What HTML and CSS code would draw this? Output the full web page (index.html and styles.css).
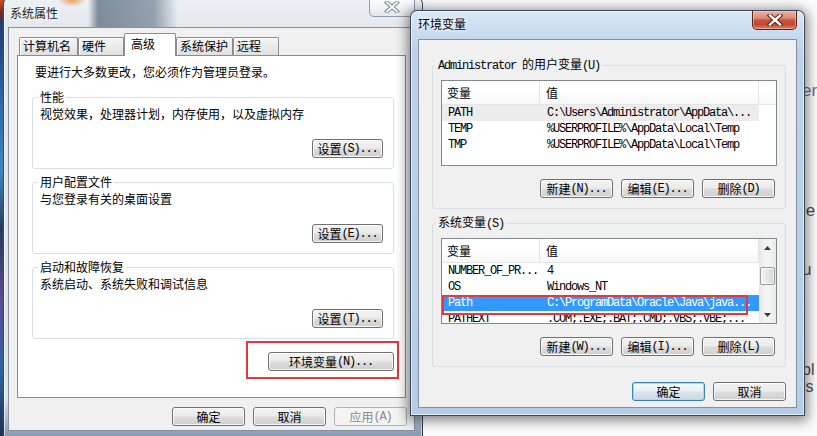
FILE: index.html
```html
<!DOCTYPE html>
<html lang="zh-CN">
<head>
<meta charset="utf-8">
<title>系统属性 - 环境变量</title>
<link rel="stylesheet" href="styles.css">
</head>
<body>
<div class="desk">
  <div class="strip"></div>

  <div class="bgpage">
    <p class="bp1 visited">er</p>
    <p class="bp2">le</p>
    <p class="bp3">u r</p>
    <p class="bp4">bl</p>
    <p class="bp5">is</p>
  </div>

  <div class="win wl">
    <div class="titlebar">
      <span class="title">系统属性</span>
      <span class="close close-in">
        <svg width="16" height="12" viewBox="0 0 16 12"><path d="M3 1.5 L13 10.5 M13 1.5 L3 10.5" stroke="#7d8794" stroke-width="4" stroke-linecap="square"/><path d="M3 1.5 L13 10.5 M13 1.5 L3 10.5" stroke="#f4f6f8" stroke-width="2" stroke-linecap="square"/></svg>
      </span>
    </div>
    <div class="client cl">
      <div class="tabs">
        <div class="tab t1">计算机名</div>
        <div class="tab t2">硬件</div>
        <div class="tab t3">高级</div>
        <div class="tab t4">系统保护</div>
        <div class="tab t5">远程</div>
      </div>
      <div class="panel">
        <p class="intro">要进行大多数更改，您必须作为管理员登录。</p>
        <fieldset class="grp">
          <legend>性能</legend>
          <p>视觉效果，处理器计划，内存使用，以及虚拟内存</p>
          <div class="row-end"><button class="btn bs">设置<span class="m">(S)...</span></button></div>
        </fieldset>
        <fieldset class="grp">
          <legend>用户配置文件</legend>
          <p>与您登录有关的桌面设置</p>
          <div class="row-end"><button class="btn bs">设置<span class="m">(E)...</span></button></div>
        </fieldset>
        <fieldset class="grp">
          <legend>启动和故障恢复</legend>
          <p>系统启动、系统失败和调试信息</p>
          <div class="row-end"><button class="btn bs">设置<span class="m">(T)...</span></button></div>
        </fieldset>
        <div class="row-end env-row">
          <span class="hl"><button class="btn benv">环境变量<span class="m">(N)...</span></button></span>
        </div>
      </div>
      <div class="foot">
        <button class="btn bw">确定</button>
        <button class="btn bw">取消</button>
        <button class="btn bw dis">应用<span class="m">(A)</span></button>
      </div>
    </div>
  </div>

  <div class="win wr">
    <div class="titlebar">
      <span class="title">环境变量</span>
      <span class="close close-act">
        <svg width="16" height="12" viewBox="0 0 16 12"><path d="M3 1.5 L13 10.5 M13 1.5 L3 10.5" stroke="#5a1d14" stroke-width="4.4" stroke-linecap="square"/><path d="M3 1.5 L13 10.5 M13 1.5 L3 10.5" stroke="#ffffff" stroke-width="2.4" stroke-linecap="square"/></svg>
      </span>
    </div>
    <div class="client cr">
      <fieldset class="rg">
        <legend><span class="m">Administrator </span>的用户变量<span class="m">(U)</span></legend>
        <div class="list">
          <div class="lbody">
            <div class="lhead"><span class="c1">变量</span><span class="c2">值</span></div>
            <div class="lrow m hov"><span class="c1">PATH</span><span class="c2">C:\Users\Administrator\AppData\...</span></div>
            <div class="lrow m"><span class="c1">TEMP</span><span class="c2">%USERPROFILE%\AppData\Local\Temp</span></div>
            <div class="lrow m"><span class="c1">TMP</span><span class="c2">%USERPROFILE%\AppData\Local\Temp</span></div>
          </div>
          <div class="hfill"></div>
        </div>
        <div class="row-end">
          <button class="btn bw">新建<span class="m">(N)...</span></button>
          <button class="btn bw">编辑<span class="m">(E)...</span></button>
          <button class="btn bw">删除<span class="m">(D)</span></button>
        </div>
      </fieldset>
      <fieldset class="rg">
        <legend>系统变量<span class="m">(S)</span></legend>
        <div class="list">
          <div class="lbody">
            <div class="lhead"><span class="c1">变量</span><span class="c2">值</span></div>
            <div class="lrow m"><span class="c1">NUMBER_OF_PR...</span><span class="c2">4</span></div>
            <div class="lrow m"><span class="c1">OS</span><span class="c2">Windows_NT</span></div>
            <div class="lrow m sel"><span class="c1">Path</span><span class="c2">C:\ProgramData\Oracle\Java\java...</span></div>
            <div class="lrow m"><span class="c1">PATHEXT</span><span class="c2">.COM;.EXE;.BAT;.CMD;.VBS;.VBE;...</span></div>
          </div>
          <div class="sbar">
            <div class="sarr"><svg width="7" height="4" viewBox="0 0 7 4"><path d="M0 4 L3.5 0 L7 4 Z" fill="#3c3c3c"/></svg></div>
            <div class="thumb"></div>
            <div class="sfill"></div>
            <div class="sarr"><svg width="7" height="4" viewBox="0 0 7 4"><path d="M0 0 L7 0 L3.5 4 Z" fill="#3c3c3c"/></svg></div>
          </div>
        </div>
        <div class="row-end">
          <button class="btn bw">新建<span class="m">(W)...</span></button>
          <button class="btn bw">编辑<span class="m">(I)...</span></button>
          <button class="btn bw">删除<span class="m">(L)</span></button>
        </div>
      </fieldset>
      <div class="rfoot">
        <button class="btn bw def">确定</button>
        <button class="btn bw">取消</button>
      </div>
    </div>
  </div>
</div>
</body>
</html>
```

FILE: styles.css
```css
* { box-sizing: border-box; }
html, body { margin: 0; padding: 0; }
body {
  width: 817px;
  height: 436px;
  overflow: hidden;
  font-family: "Noto Sans CJK SC", "Liberation Sans", sans-serif;
  font-size: 12px;
  line-height: 16px;
  color: #000;
}
.desk {
  position: relative;
  width: 817px;
  height: 436px;
  overflow: hidden;
  background: #fbfbfb;
}
.strip {
  position: absolute;
  left: 0;
  top: 0;
  width: 4px;
  height: 436px;
  background: linear-gradient(#c8502e 0, #7a2a1a 12px, #1d3d78 24px, #2c5fa6 90px, #3d86c2 170px, #243a5c 230px, #5b4a98 300px, #2f63a6 370px, #1f3150 436px);
}
.m {
  font-family: "Liberation Mono", monospace;
  font-size: 12px;
  letter-spacing: -1.2px;
}

/* background web page fragments */
.bgpage {
  position: absolute;
  left: 802px;
  top: 0;
  display: flex;
  flex-direction: column;
  font-family: "Liberation Sans", sans-serif;
  font-size: 17px;
  color: #4a4a4a;
}
.bgpage p { margin: 0; line-height: 20px; height: 20px; white-space: nowrap; }
.bgpage .visited { color: #6a6a9e; }
.bp1 { margin-top: 81px !important; }
.bp2 { margin-top: 100px !important; }
.bp3 { margin-top: 39px !important; }
.bp4 { margin-top: 81px !important; font-size: 16px; line-height: 17px !important; height: 17px !important; }
.bp5 { font-size: 16px; line-height: 17px !important; height: 17px !important; }

/* windows */
.win {
  position: absolute;
  display: flex;
  flex-direction: column;
  border: 1px solid rgba(20, 30, 45, 0.78);
  border-radius: 7px 7px 0 0;
}
.wl {
  left: 3px;
  top: -3px;
  width: 420px;
  height: 442px;
  padding: 0 7px 7px 4px;
  background:
    radial-gradient(ellipse 14px 7px at 68px 2px, rgba(230, 140, 60, 0.85), rgba(230, 140, 60, 0) 100%) no-repeat,
    linear-gradient(to right, rgba(110, 125, 140, 0) 0, rgba(110, 125, 140, 0) 84px, rgba(100, 116, 132, 0.8) 94px, rgba(112, 128, 144, 0.7) 150px, rgba(120, 135, 150, 0) 174px) 0 0 / 100% 30px no-repeat,
    linear-gradient(#eef1f4 0, #e3e8ee 30px, #dde4eb 400px, #8b9db2 436px);
  box-shadow: inset 0 0 0 1px rgba(255, 255, 255, 0.55);
}
.wr {
  left: 410px;
  top: 10px;
  width: 395px;
  height: 406px;
  padding: 0 7px 7px 7px;
  z-index: 2;
  background: linear-gradient(#d9e7f5 0, #c6daee 26px, #bcd2ea 40px, #b5cde7 100%);
  box-shadow: inset 0 0 0 1px rgba(255, 255, 255, 0.6), 0 2px 12px 3px rgba(0, 0, 0, 0.45);
}
.titlebar {
  display: flex;
  justify-content: space-between;
  align-items: flex-start;
  flex: none;
}
.wl .titlebar { height: 29px; }
.wr .titlebar { height: 28px; }
.title { text-shadow: 0 0 6px #fff, 0 0 3px #fff; }
.wl .title { padding: 7px 0 0 2px; color: #1a1a1a; }
.wr .title { padding: 5px 0 0 0; }
.close {
  display: flex;
  align-items: center;
  justify-content: center;
  height: 19px;
  border-radius: 0 0 5px 5px;
}
.close-in {
  width: 46px;
  border: 1px solid #8e9aa8;
  border-top: 0;
  background: linear-gradient(#fdfdfe, #eef1f5 60%, #e2e7ed);
}
.close-act {
  width: 45px;
  border: 1px solid #5b2219;
  border-top: 0;
  background: linear-gradient(#eab2a4 0, #dc8a77 40%, #c9503b 52%, #c24832 75%, #d9856c 100%);
  box-shadow: inset 0 0 0 1px rgba(255, 220, 210, 0.45);
}

/* client areas */
.client {
  flex: none;
  background: #f0f0f0;
  border: 1px solid rgba(60, 80, 105, 0.6);
}
.cl {
  height: 404px;
  padding: 0 8px;
}
.cr {
  height: 369px;
  padding: 16px 10px 0 13px;
}

/* tabs */
.tabs {
  display: flex;
  align-items: flex-end;
  height: 27px;
  padding-left: 2px;
}
.tab {
  height: 18px;
  border: 1px solid #898c95;
  border-bottom: 0;
  border-radius: 2px 2px 0 0;
  background: linear-gradient(#f4f4f4, #ebebeb 50%, #dfdfdf);
  box-shadow: inset 1px 1px 0 #fff;
  padding-left: 3px;
  white-space: nowrap;
}
.t1 { width: 59px; }
.t2 { width: 46px; }
.t3 {
  width: 52px;
  height: 23px;
  margin-bottom: -1px;
  background: #fff;
  box-shadow: none;
  position: relative;
  z-index: 1;
  padding: 2px 0 0 6px;
}
.t4 { width: 57px; }
.t5 { width: 46px; }
.panel {
  height: 343px;
  border: 1px solid #898c95;
  background: #fff;
  padding: 8px 11px 0 14px;
}
.intro { margin: 0 0 0 3px; }

/* group boxes */
.grp, .rg {
  margin: 0;
  min-width: 0;
  border: 1px solid #d5dfe5;
  border-radius: 3px;
}
.grp {
  margin-top: 9px;
  padding: 1px 10px 10px 7px;
}
.grp + .grp { margin-top: 5px; }
.grp legend {
  padding: 0 2px;
  margin-left: -2px;
  line-height: 16px;
}
.grp p { margin: 0; }
.row-end { display: flex; justify-content: flex-end; gap: 8px; }
.grp .row-end { margin-top: 17px; }
.env-row { margin-top: 13px; }
.hl { position: relative; display: block; }
.hl::after {
  content: "";
  position: absolute;
  left: -22px;
  right: -5px;
  top: -11px;
  bottom: -8px;
  border: 2px solid #e4373f;
}

.rg { padding: 6px 8px 10px 8px; }
.rg + .rg { margin-top: 5px; }
.rg legend {
  padding: 0 2px;
  margin-left: -5px;
  line-height: 16px;
  white-space: nowrap;
}
.rg .row-end { margin-top: 13px; margin-right: 2px; }

/* buttons */
.btn {
  font: inherit;
  height: 19px;
  padding: 0;
  border: 1px solid #707070;
  border-radius: 3px;
  background: linear-gradient(#f2f2f2 0%, #ebebeb 49%, #dddddd 51%, #cfcfcf 100%);
  box-shadow: inset 0 0 0 1px rgba(255, 255, 255, 0.8);
  color: #000;
  display: flex;
  align-items: center;
  justify-content: center;
  line-height: 16px;
  white-space: nowrap;
}
.bs { width: 71px; }
.benv { width: 126px; }
.bw { width: 73px; }
.dis {
  border-color: #adb2b5;
  background: #f4f4f4;
  color: #8a8a8a;
  box-shadow: none;
}
.def {
  border-color: #3c7fb1;
  box-shadow: inset 0 0 0 1px #9fdcf8;
  background: linear-gradient(#f3f8fb 0%, #e8f1f7 49%, #d9e5ee 51%, #cbd9e4 100%);
}
.foot {
  display: flex;
  justify-content: flex-end;
  gap: 8px;
  margin-top: 9px;
  margin-right: -1px;
}
.rfoot {
  display: flex;
  justify-content: flex-end;
  gap: 8px;
  margin-top: 15px;
}

/* list views */
.list {
  height: 86px;
  border: 1px solid #828790;
  background: #fff;
  display: flex;
  overflow: hidden;
}
.lbody { width: 317px; flex: none; }
.hfill {
  flex: 1;
  height: 24px;
  border-bottom: 1px solid #e5e5e5;
  background: linear-gradient(#ffffff 0, #ffffff 45%, #f6f7f8 100%);
}
.lhead {
  display: flex;
  height: 24px;
  border-bottom: 1px solid #e5e5e5;
  background: linear-gradient(#ffffff 0, #ffffff 45%, #f6f7f8 100%);
}
.lhead span {
  height: 23px;
  line-height: 23px;
  border-right: 1px solid #e5e5e5;
}
.lhead .c1 { width: 98px; padding-left: 5px; }
.lhead .c2 { width: 219px; padding-left: 6px; }
.lrow {
  display: flex;
  width: 317px;
  height: 16px;
  line-height: 16px;
  white-space: nowrap;
}
.lrow .c1 { width: 98px; padding-left: 6px; overflow: hidden; }
.lrow .c2 { width: 219px; padding-left: 7px; overflow: hidden; }
.hov { background: #ececec; }
.sel { background: #3399ff; color: #fff; position: relative; }
.sel::after {
  content: "";
  position: absolute;
  left: 0;
  top: 0;
  width: 302px;
  height: 16px;
  border: 2px solid #e4373f;
}
.sbar {
  width: 17px;
  flex: none;
  display: flex;
  flex-direction: column;
  background: linear-gradient(to right, #e6e6e6, #f3f3f3 35%, #f3f3f3 65%, #e9e9e9);
}
.sarr {
  height: 17px;
  flex: none;
  display: flex;
  align-items: center;
  justify-content: center;
}
.thumb {
  margin: 11px 1px 0 1px;
  height: 18px;
  flex: none;
  border: 1px solid #9a9a9a;
  border-radius: 2px;
  background: linear-gradient(to right, #f6f6f6, #e6e6e6 50%, #d6d6d6);
  box-shadow: inset 0 0 0 1px rgba(255, 255, 255, 0.7);
}
.sfill { flex: 1; }
```
